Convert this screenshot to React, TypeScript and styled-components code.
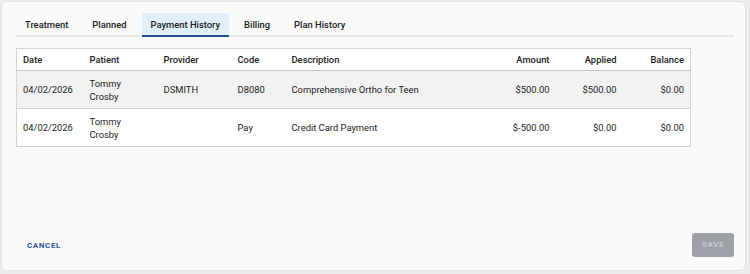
import React from "react";
import styled, { createGlobalStyle } from "styled-components";

const Global = createGlobalStyle`
  html, body { margin: 0; padding: 0; background: #ececec; }
  body { font-family: Roboto, "Noto Sans", "Liberation Sans", sans-serif; color: #222; }
  * { box-sizing: border-box; }
`;

const Card = styled.div`
  margin: 1px 0 0 1px;
  width: 745px;
  height: 270px;
  background: #fafafa;
  border: 1px solid #e2e2e2;
  border-radius: 6px;
  display: flex;
  flex-direction: column;
  padding: 11px 11px 13px 14px;
`;

const TabBar = styled.div`
  display: flex;
  gap: 6px;
  border-bottom: 2px solid #e6e6e6;
  height: 24px;
`;

const Tab = styled.div<{ $active?: boolean }>`
  padding: 1px 9px 0;
  height: 24px;
  display: flex;
  align-items: center;
  font-size: 9.4px;
  font-weight: 500;
  color: #222;
  background: ${(p) => (p.$active ? "#e1eefc" : "transparent")};
  border-bottom: 2px solid ${(p) => (p.$active ? "#1f4f8f" : "transparent")};
  border-radius: 3px 3px 0 0;
  margin-bottom: -2px;
`;

const Table = styled.table`
  margin-top: 11px;
  width: 675px;
  border-collapse: collapse;
  border: 1px solid #d4d4d4;
  font-size: 9.4px;
`;

const Th = styled.th<{ $right?: boolean; $w?: number }>`
  text-align: ${(p) => (p.$right ? "right" : "left")};
  font-weight: 500;
  height: 22px;
  padding: 0 6px;
  background: #fff;
  border-bottom: 1px solid #c9c9c9;
  width: ${(p) => (p.$w ? `${p.$w}px` : "auto")};
`;

const Tr = styled.tr<{ $shaded?: boolean }>`
  background: ${(p) => (p.$shaded ? "#f2f2f2" : "#fff")};
  border-bottom: 1px solid #cfcfcf;
`;

const Td = styled.td<{ $right?: boolean }>`
  text-align: ${(p) => (p.$right ? "right" : "left")};
  font-weight: 400;
  height: 38px;
  padding: 0 6px;
  line-height: 13px;
  vertical-align: middle;
`;

const Footer = styled.div`
  margin-top: auto;
  display: flex;
  justify-content: space-between;
  align-items: center;
`;

const CancelButton = styled.button`
  border: none;
  background: transparent;
  color: #2b5597;
  font-family: Roboto, "Noto Sans", sans-serif;
  font-weight: 700;
  font-size: 8px;
  letter-spacing: 0.6px;
  padding: 9px 11px 7px;
`;

const SaveButton = styled.button`
  border: none;
  background: #9da1a7;
  color: #c6c9cd;
  font-family: Roboto, "Noto Sans", sans-serif;
  font-weight: 700;
  font-size: 8px;
  letter-spacing: 0.6px;
  width: 42px;
  height: 24px;
  border-radius: 3px;
`;

const rows = [
  { date: "04/02/2026", provider: "DSMITH", code: "D8080", desc: "Comprehensive Ortho for Teen", amount: "$500.00", applied: "$500.00", balance: "$0.00" },
  { date: "04/02/2026", provider: "", code: "Pay", desc: "Credit Card Payment", amount: "$-500.00", applied: "$0.00", balance: "$0.00" },
];

export default function App() {
  return (
    <>
      <Global />
      <Card>
        <TabBar>
          <Tab>Treatment</Tab>
          <Tab>Planned</Tab>
          <Tab $active>Payment History</Tab>
          <Tab>Billing</Tab>
          <Tab>Plan History</Tab>
        </TabBar>
        <Table>
          <thead>
            <tr>
              <Th $w={67}>Date</Th>
              <Th $w={74}>Patient</Th>
              <Th $w={74}>Provider</Th>
              <Th $w={54}>Code</Th>
              <Th>Description</Th>
              <Th $right $w={80}>Amount</Th>
              <Th $right $w={67}>Applied</Th>
              <Th $right $w={68}>Balance</Th>
            </tr>
          </thead>
          <tbody>
            {rows.map((r, i) => (
              <Tr key={i} $shaded={i === 0}>
                <Td>{r.date}</Td>
                <Td>Tommy<br />Crosby</Td>
                <Td>{r.provider}</Td>
                <Td>{r.code}</Td>
                <Td>{r.desc}</Td>
                <Td $right>{r.amount}</Td>
                <Td $right>{r.applied}</Td>
                <Td $right>{r.balance}</Td>
              </Tr>
            ))}
          </tbody>
        </Table>
        <Footer>
          <CancelButton>CANCEL</CancelButton>
          <SaveButton>SAVE</SaveButton>
        </Footer>
      </Card>
    </>
  );
}
